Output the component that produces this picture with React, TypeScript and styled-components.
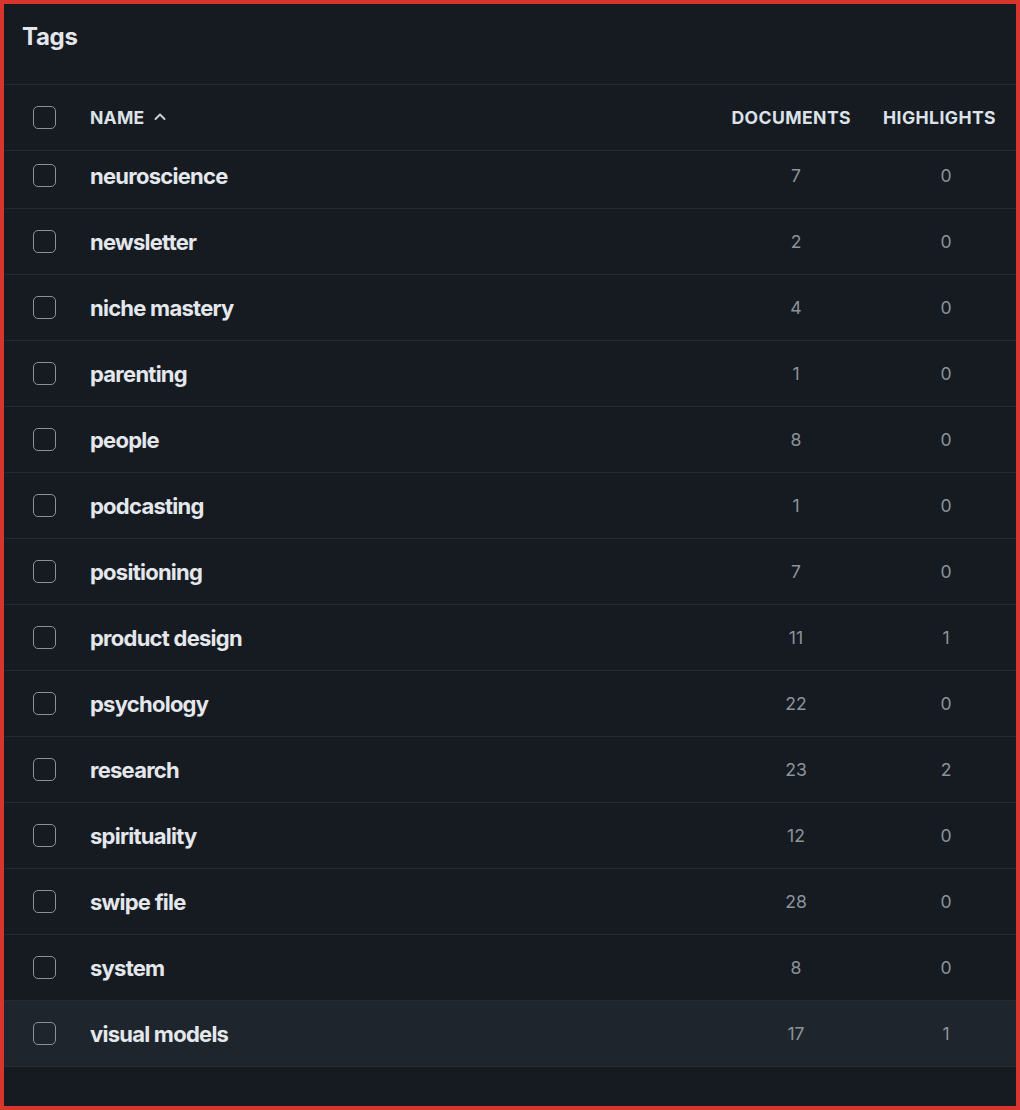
import styled, { createGlobalStyle } from "styled-components";

type Tag = {
  name: string;
  documents: number;
  highlights: number;
};

const tags: Tag[] = [
  { name: "neuroscience", documents: 7, highlights: 0 },
  { name: "newsletter", documents: 2, highlights: 0 },
  { name: "niche mastery", documents: 4, highlights: 0 },
  { name: "parenting", documents: 1, highlights: 0 },
  { name: "people", documents: 8, highlights: 0 },
  { name: "podcasting", documents: 1, highlights: 0 },
  { name: "positioning", documents: 7, highlights: 0 },
  { name: "product design", documents: 11, highlights: 1 },
  { name: "psychology", documents: 22, highlights: 0 },
  { name: "research", documents: 23, highlights: 2 },
  { name: "spirituality", documents: 12, highlights: 0 },
  { name: "swipe file", documents: 28, highlights: 0 },
  { name: "system", documents: 8, highlights: 0 },
  { name: "visual models", documents: 17, highlights: 1 },
];

const HOVERED = "visual models";

const App = () => {
  return (
    <>
      <GlobalStyle />
      <Frame>
        <TitleBar>
          <Title>Tags</Title>
        </TitleBar>
        <HeaderRow>
          <CheckCell>
            <Checkbox />
          </CheckCell>
          <NameHeader>
            NAME
            <svg width="14" height="14" viewBox="0 0 14 14" fill="none">
              <polyline
                points="2.5,9 7,4.5 11.5,9"
                stroke="currentColor"
                strokeWidth="2"
                strokeLinecap="round"
                strokeLinejoin="round"
              />
            </svg>
          </NameHeader>
          <CountHeader>Documents</CountHeader>
          <CountHeader>Highlights</CountHeader>
        </HeaderRow>
        <Body>
          <Scroller>
            {tags.map((tag) => (
              <Row key={tag.name} $active={tag.name === HOVERED}>
                <CheckCell>
                  <Checkbox />
                </CheckCell>
                <Name>{tag.name}</Name>
                <Count>{tag.documents}</Count>
                <Count $nudge>{tag.highlights}</Count>
              </Row>
            ))}
          </Scroller>
        </Body>
      </Frame>
    </>
  );
};

export default App;

const GlobalStyle = createGlobalStyle`
  html, body {
    margin: 0;
    padding: 0;
    background: #161b22;
  }

  body {
    font-family: Inter, "Noto Sans", sans-serif;
  }
`;

const Frame = styled.div`
  box-sizing: border-box;
  width: 1020px;
  height: 1110px;
  border: 4px solid #d8352f;
  background: #161b22;
  display: flex;
  flex-direction: column;
  overflow: hidden;
`;

const TitleBar = styled.div`
  height: 80px;
  padding: 0 18px;
  display: flex;
  align-items: flex-start;
  border-bottom: 1px solid #242a31;
  flex-shrink: 0;
`;

const Title = styled.h1`
  margin: 16px 0 0;
  font-size: 24px;
  line-height: 34px;
  font-weight: 700;
  color: #e3e6ea;
  letter-spacing: -0.3px;
`;

const grid = `
  display: grid;
  grid-template-columns: 86px 1fr 150px 145px;
  align-items: center;
`;

const HeaderRow = styled.div`
  ${grid};
  height: 65px;
  border-bottom: 1px solid #242a31;
  flex-shrink: 0;
`;

const Row = styled.div<{ $active?: boolean }>`
  ${grid};
  height: 65px;
  border-bottom: 1px solid #242a31;
  background: ${(p) => (p.$active ? "#1f252d" : "transparent")};
`;

const CheckCell = styled.div`
  padding-left: 29px;
  display: flex;
  align-items: center;
`;

const Checkbox = styled.span`
  box-sizing: border-box;
  width: 23px;
  height: 23px;
  border: 1.5px solid #8a9199;
  border-radius: 5px;
`;

const NameHeader = styled.div`
  display: flex;
  align-items: center;
  gap: 9px;
  font-size: 17.6px;
  font-weight: 700;
  letter-spacing: 0.2px;
  color: #dde2e8;

  svg {
    color: #c9ced4;
    margin-top: -1px;
  }
`;

const CountHeader = styled.div`
  text-align: right;
  padding-right: 20px;
  font-size: 17.6px;
  font-weight: 700;
  letter-spacing: 0.4px;
  text-transform: uppercase;
  color: #dde2e8;
`;

const Body = styled.div`
  flex: 1;
  overflow: hidden;
`;

const Scroller = styled.div`
  margin-top: -8px;
`;

const Name = styled.div`
  font-size: 22px;
  font-weight: 700;
  letter-spacing: -0.75px;
  color: #e4e7eb;
`;

const Count = styled.div<{ $nudge?: boolean }>`
  text-align: center;
  padding-left: ${(p) => (p.$nudge ? "5px" : "0")};
  font-size: 17.6px;
  color: #8c939b;
`;
